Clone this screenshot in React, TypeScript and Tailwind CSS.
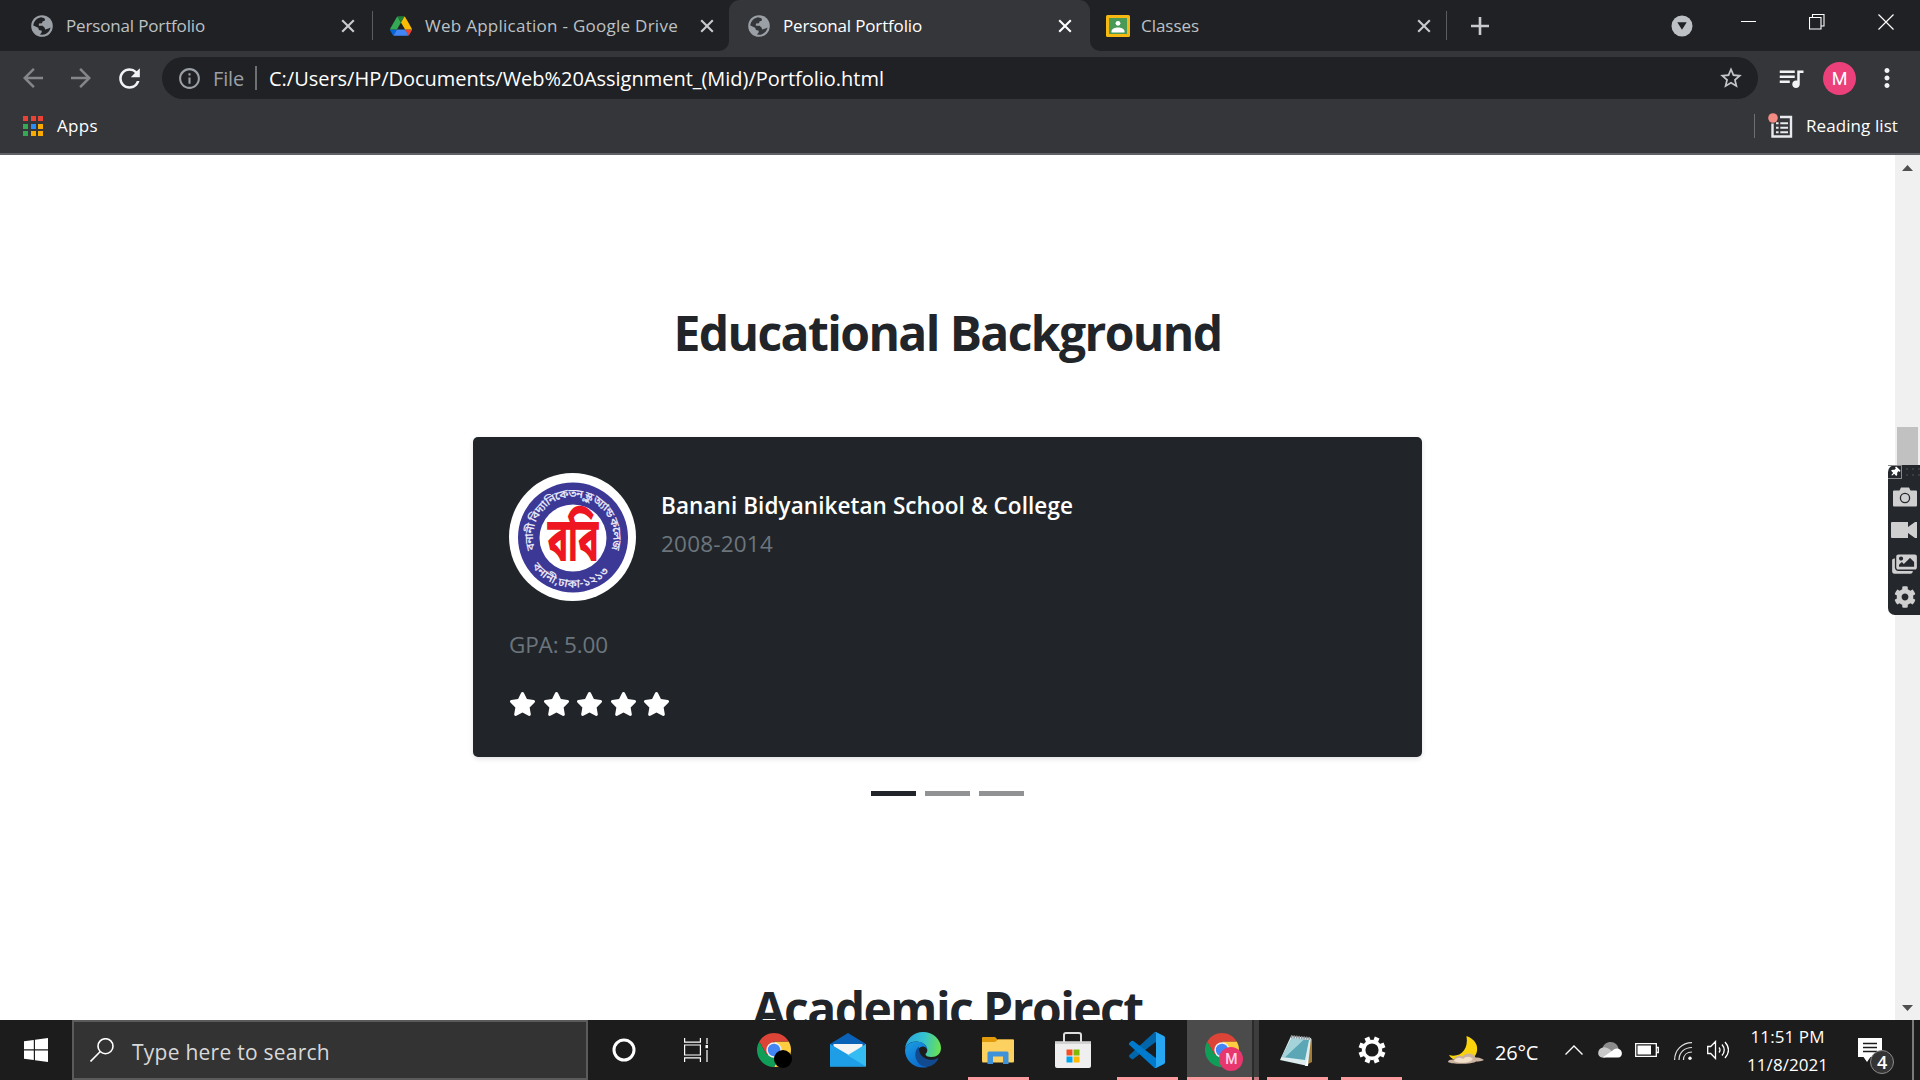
import { useLayoutEffect, useRef, useState } from "react";
import type { ReactNode } from "react";
import { MdArrowBack, MdArrowForward, MdRefresh, MdInfoOutline, MdStarBorder, MdQueueMusic, MdMoreVert } from "react-icons/md";
import { FaStar, FaCog, FaThumbtack, FaImages } from "react-icons/fa";

/** One line of text whose tracking is adjusted so it fills the given width. */
function Line({ children, width, className = "" }: { children: string; width: number; className?: string }) {
  const ref = useRef<HTMLSpanElement>(null);
  const [spacing, setSpacing] = useState(0);
  useLayoutEffect(() => {
    if (ref.current) {
      setSpacing((width - ref.current.getBoundingClientRect().width) / children.length);
    }
  }, [width, children]);
  return (
    <span ref={ref} className={`inline-block shrink-0 whitespace-pre ${className}`} style={{ letterSpacing: `${spacing}px` }}>
      {children}
    </span>
  );
}

function Cross({ className = "" }: { className?: string }) {
  return (
    <svg viewBox="0 0 14 14" className={`h-3.5 w-3.5 shrink-0 ${className}`} fill="none" stroke="currentColor" strokeWidth="2.1">
      <path d="M1.2 1.2 12.8 12.8M12.8 1.2 1.2 12.8" />
    </svg>
  );
}

function Globe({ className = "" }: { className?: string }) {
  return (
    <svg viewBox="0 0 22 22" className={`h-[22px] w-[22px] shrink-0 ${className}`}>
      <circle cx="11" cy="11" r="10.800" fill="#9aa0a6" />
      <path
        d="M2.300 10.500C2.600 6.500 6 3 10 2.300L13.500 3.300 14 5.500 11.500 6.500 11 8.200 8 8.500 7.800 10.800 11.500 10.800 13.500 12.500 14.200 14.500 17.500 13.600 19.500 12.500C19 16 16 19.500 11.500 19.800L8.800 19.400 10.500 17.800 10.800 15.800 8 15 7.200 12.800Z"
        fill="currentColor"
      />
    </svg>
  );
}

function DriveIcon() {
  return (
    <svg viewBox="0 0 87.3 78" className="h-5 w-[22px] shrink-0">
      <path fill="#0066da" d="m6.6 66.85 3.85 6.65c.8 1.4 1.95 2.5 3.3 3.3l13.75-23.8h-27.5c0 1.55.4 3.1 1.2 4.5z" />
      <path fill="#34a853" d="m43.65 25-13.75-23.8c-1.35.8-2.5 1.9-3.3 3.3l-25.4 44a9.06 9.06 0 0 0 -1.2 4.5h27.5z" />
      <path fill="#ea4335" d="m73.55 76.8c1.35-.8 2.5-1.9 3.3-3.3l1.6-2.75 7.65-13.25c.8-1.4 1.2-2.95 1.2-4.5h-27.502l5.852 11.5z" />
      <path fill="#188038" d="m43.65 25 13.75-23.8c-1.35-.8-2.9-1.2-4.5-1.2h-18.5c-1.6 0-3.15.45-4.5 1.2z" />
      <path fill="#4285f4" d="m59.8 53h-32.3l-13.75 23.8c1.35.8 2.9 1.2 4.5 1.2h50.8c1.6 0 3.15-.45 4.5-1.2z" />
      <path fill="#fbbc04" d="m73.4 26.5-12.7-22c-.8-1.4-1.95-2.5-3.3-3.3l-13.75 23.8 16.15 28h27.45c0-1.55-.4-3.1-1.2-4.5z" />
    </svg>
  );
}

function ClassroomIcon() {
  return (
    <svg viewBox="0 0 24 22" className="h-[22px] w-6 shrink-0">
      <rect width="24" height="22" rx="1.5" fill="#f5b912" />
      <rect x="3" y="3" width="18" height="16" fill="#4a9a57" />
      <circle cx="12" cy="8.3" r="2.4" fill="#fff" />
      <path d="M5.5 17.5v-1.2c0-2.5 3.5-3.9 6.500-3.900s6.500 1.400 6.500 3.900v1.200z" fill="#fff" />
    </svg>
  );
}

function TabStrip() {
  return (
    <div className="flex h-[51px] items-center bg-[#202124] text-[17px] text-[#bdc1c6]">
      <div className="flex h-full w-[372px] items-center pl-[31px] pr-[17px]">
        <Globe className="mr-[13px] text-[#202124]" />
        <Line width={139}>Personal Portfolio</Line>
        <Cross className="ml-auto text-[#c8cacd]" />
      </div>
      <div className="h-[29px] w-px bg-[#5a5c60]" />
      <div className="flex h-full w-[356px] items-center pl-[17px] pr-[15px]">
        <DriveIcon />
        <Line width={253} className="ml-[13px]">Web Application - Google Drive</Line>
        <Cross className="ml-auto text-[#c8cacd]" />
      </div>
      <div className="relative flex h-full w-[361px] items-center rounded-t-[11px] bg-[#35363a] pl-[19px] pr-[18px] text-white">
        <svg viewBox="0 0 10 10" className="absolute bottom-0 -left-2.5 h-2.5 w-2.5"><path d="M10 0V10H0A10 10 0 0 0 10 0" fill="#35363a" /></svg>
        <svg viewBox="0 0 10 10" className="absolute bottom-0 -right-2.5 h-2.5 w-2.5"><path d="M0 0V10H10A10 10 0 0 1 0 0" fill="#35363a" /></svg>
        <Globe className="mr-[13px] text-[#35363a]" />
        <Line width={139}>Personal Portfolio</Line>
        <Cross className="ml-auto" />
      </div>
      <div className="flex h-full w-[356px] items-center pl-4 pr-[15px]">
        <ClassroomIcon />
        <Line width={58} className="ml-[11px]">Classes</Line>
        <Cross className="ml-auto text-[#c8cacd]" />
      </div>
      <div className="h-[29px] w-px bg-[#5a5c60]" />
      <svg viewBox="0 0 18 18" className="ml-6 h-[18px] w-[18px] text-[#c8cacd]" stroke="currentColor" strokeWidth="2.6"><path d="M9 0v18M0 9h18" /></svg>
      <svg viewBox="0 0 22 22" className="ml-[182px] h-[22px] w-[22px]">
        <circle cx="11" cy="11" r="10.5" fill="#bdc1c6" />
        <path d="M6.300 7.300h9.400L11 14.800z" fill="#202124" />
      </svg>
      <div className="ml-[48px] flex h-full items-start pt-3.5 text-white">
        <svg viewBox="0 0 16 16" className="h-4 w-4" fill="none" stroke="currentColor"><path d="M0 7.500h15" /></svg>
        <svg viewBox="0 0 16 16" className="ml-[52px] h-4 w-4" fill="none" stroke="currentColor" strokeWidth="1.100"><path d="M.5 3.500h11.500v11.500H.5zM3.500 3.500v-3h11.500v11.500h-3" /></svg>
        <svg viewBox="0 0 16 16" className="ml-[53px] h-4 w-4" fill="none" stroke="currentColor" strokeWidth="1.200"><path d="M.5.5l15 15M15.500.5l-15 15" /></svg>
      </div>
    </div>
  );
}

function Toolbar() {
  return (
    <div className="flex h-[54px] items-center bg-[#35363a] pl-[18px]">
      <MdArrowBack className="h-[30px] w-[30px] text-[#85868a]" />
      <MdArrowForward className="ml-[18px] h-[30px] w-[30px] text-[#85868a]" />
      <MdRefresh className="ml-[18px] h-[31px] w-[31px] text-[#f1f3f4]" />
      <div className="ml-[17px] flex h-[42px] w-[1596px] items-center rounded-full bg-[#202124] pl-[15px] pr-3.5 text-[20px]">
        <MdInfoOutline className="h-[25px] w-[25px] text-[#9aa0a6]" />
        <Line width={31} className="ml-[11px] pt-px text-[#9aa0a6]">File</Line>
        <div className="ml-[11px] h-6 w-[2px] bg-[#6d6f73]" />
        <Line width={615} className="ml-3 pt-px text-white">C:/Users/HP/Documents/Web%20Assignment_(Mid)/Portfolio.html</Line>
        <MdStarBorder className="ml-auto h-[26px] w-[26px] text-[#c2c5c9]" />
      </div>
      <MdQueueMusic className="ml-[18px] h-[30px] w-[30px] text-[#f1f3f4]" />
      <div className="ml-[17px] flex h-[33px] w-[33px] items-center justify-center rounded-full bg-[#ec407a] font-[Roboto] text-[18px] text-white">M</div>
      <MdMoreVert className="ml-4 h-[30px] w-[30px] text-[#f1f3f4]" />
    </div>
  );
}

function AppsGrid() {
  return (
    <div className="grid grid-cols-3 gap-[2.500px]">
      <i className="h-[5px] w-[5px] bg-[#ea4335]" /><i className="h-[5px] w-[5px] bg-[#ea4335]" /><i className="h-[5px] w-[5px] bg-[#ea4335]" />
      <i className="h-[5px] w-[5px] bg-[#34a853]" /><i className="h-[5px] w-[5px] bg-[#2a8cf5]" /><i className="h-[5px] w-[5px] bg-[#f9ab00]" />
      <i className="h-[5px] w-[5px] bg-[#34a853]" /><i className="h-[5px] w-[5px] bg-[#f9ab00]" /><i className="h-[5px] w-[5px] bg-[#f9ab00]" />
    </div>
  );
}

function BookmarksBar() {
  return (
    <div className="flex h-[50px] items-center border-b-2 border-[#606166] bg-[#35363a] pb-1.5 pl-[23px] text-[17px] text-white">
      <AppsGrid />
      <Line width={41} className="ml-3.5">Apps</Line>
      <div className="ml-auto h-6 w-px bg-[#6d6f73]" />
      <svg viewBox="0 0 26 26" className="ml-[13px] h-[26px] w-[26px]" fill="none">
        <path d="M4.500 10.500v13h18.500v-19.500h-11" stroke="#e8eaed" strokeWidth="2.400" />
        <path d="M8 10.200h2.600m1.700 0h7.700M8 14.700h2.600m1.700 0h7.700M8 19.200h2.600m1.700 0h7.700" stroke="#e8eaed" strokeWidth="2" />
        <circle cx="5" cy="5" r="4.800" fill="#f28b82" />
      </svg>
      <Line width={92} className="ml-3 mr-[22px]">Reading list</Line>
    </div>
  );
}

function SchoolSeal() {
  return (
    <svg viewBox="0 0 127 128" className="h-[128px] w-[127px] shrink-0">
      <defs>
        <path id="seal-upper" d="M26 76.300A40 40 0 1 1 101 79.800" />
        <path id="seal-lower" d="M21.400 91A50 50 0 0 0 102.300 96.600" />
      </defs>
      <ellipse cx="63.500" cy="64" rx="63.500" ry="64" fill="#fff" />
      <circle cx="64" cy="64.500" r="55" fill="#3b3896" />
      <circle cx="64" cy="65" r="33.500" fill="#fff" />
      <g fill="#e6e5f6" fontWeight="600" fontFamily="'Noto Sans Bengali','Noto Sans',sans-serif">
        <text fontSize="11.500"><textPath href="#seal-upper" textLength="150">বনানী বিদ্যানিকেতন স্কুল অ্যান্ড কলেজ</textPath></text>
        <text fontSize="11.500"><textPath href="#seal-lower" textLength="88" startOffset="3">বনানী,ঢাকা-১২১৩</textPath></text>
      </g>
      <text transform="translate(64 88) scale(1 1.480)" textAnchor="middle" fontSize="41" fontWeight="800" textLength="51" lengthAdjust="spacingAndGlyphs" fill="#ee1620" fontFamily="'Noto Sans Bengali','Noto Sans',sans-serif">ববি</text>
    </svg>
  );
}

function EducationCard() {
  return (
    <section className="h-[320px] w-[949px] rounded-[5px] bg-[#212529] px-9 pt-9 shadow-[0_2px_5px_rgba(0,0,0,0.12)]">
      <div className="flex">
        <SchoolSeal />
        <div className="ml-[25px] flex flex-col items-start pt-3.5 text-[22.500px] leading-[38px]">
          <Line width={412} className="font-semibold text-white">Banani Bidyaniketan School &amp; College</Line>
          <Line width={112} className="text-[#6c757d]">2008-2014</Line>
        </div>
      </div>
      <div className="mt-[25px] flex h-[38px] items-center text-[22.500px] text-[#6c757d]">
        <Line width={99}>GPA: 5.00</Line>
      </div>
      <div className="mt-7 flex gap-[6.600px] text-white">
        <FaStar className="h-6 w-[27px]" /><FaStar className="h-6 w-[27px]" /><FaStar className="h-6 w-[27px]" /><FaStar className="h-6 w-[27px]" /><FaStar className="h-6 w-[27px]" />
      </div>
    </section>
  );
}

function RecorderWidget() {
  return (
    <div className="absolute top-[310px] right-0 flex h-[150px] w-8 flex-col items-center rounded-l-[7px] bg-[#24272c] text-[#cfcfcf]">
      <div className="flex h-3.5 w-full items-center">
        <div className="flex h-3.5 w-3.5 items-center justify-center border border-l-0 border-[#8a8a8a]"><FaThumbtack className="h-2.5 w-2.5 rotate-45 text-white" /></div>
        <div className="ml-1 grid grid-cols-3 gap-1"><i className="h-0.5 w-0.5 bg-[#3a3d42]" /><i className="h-0.5 w-0.5 bg-[#3a3d42]" /><i className="h-0.5 w-0.5 bg-[#3a3d42]" /><i className="h-0.5 w-0.5 bg-[#3a3d42]" /><i className="h-0.5 w-0.5 bg-[#3a3d42]" /><i className="h-0.5 w-0.5 bg-[#3a3d42]" /></div>
      </div>
      <svg viewBox="0 0 24 20" className="mt-2 ml-px h-5 w-6">
        <path d="M1 3.500h5.500L8 .5h8l1.500 3H23q1 0 1 1v14q0 1-1 1H1q-1 0-1-1v-14q0-1 1-1z" fill="#cfcfcf" />
        <circle cx="12" cy="11" r="4.600" fill="none" stroke="#24272c" strokeWidth="1.300" />
      </svg>
      <svg viewBox="0 0 26 18" className="mt-3.5 h-[18px] w-[26px]"><path d="M1 1h16v5l7-5h2v16h-2l-7-5v5H1q-1 0-1-1V2q0-1 1-1z" fill="#cfcfcf" /></svg>
      <FaImages className="mt-3.5 ml-px h-[22px] w-[25px]" />
      <FaCog className="mt-[11px] ml-px h-[22px] w-[22px]" />
    </div>
  );
}

function Page() {
  return (
    <div className="relative flex h-[865px] overflow-hidden bg-white">
      <main className="flex flex-1 flex-col items-center text-[#212529]">
        <h2 className="mt-[143px] flex h-[70px] items-center text-[48px] leading-[70px] font-bold"><Line width={548}>Educational Background</Line></h2>
        <div className="mt-[69px]"><EducationCard /></div>
        <div className="mt-[34px] flex gap-[9px]">
          <i className="h-[5px] w-[45px] bg-[#212529]" /><i className="h-[5px] w-[45px] bg-[#909293]" /><i className="h-[5px] w-[45px] bg-[#909293]" />
        </div>
        <h2 className="mt-[178px] flex h-[70px] shrink-0 items-center text-[48px] leading-[70px] font-bold"><Line width={390}>Academic Project</Line></h2>
      </main>
      <aside className="flex w-[25px] flex-col items-center bg-[#f0f0f0]">
        <svg viewBox="0 0 11 6" className="mt-2.5 h-1.5 w-[11px]"><path d="M0 6h11L5.500 0z" fill="#505050" /></svg>
        <i className="mt-[256px] h-[120px] w-[21px] bg-[#c1c1c1]" />
        <svg viewBox="0 0 11 6" className="mt-auto mb-[9px] h-1.5 w-[11px]"><path d="M0 0h11L5.500 6z" fill="#505050" /></svg>
      </aside>
      <RecorderWidget />
    </div>
  );
}

function ChromeIcon() {
  return (
    <svg viewBox="0 0 34 34" className="h-[34px] w-[34px]">
      <path d="M17 8.500H31.720A17 17 0 0 1 17 34L24.400 21.200z" fill="#ffcd40" />
      <path d="M9.600 21.200 2.280 8.500A17 17 0 0 0 17 34L24.400 21.200z" fill="#0f9d58" />
      <path d="M17 8.500H31.720A17 17 0 0 0 2.280 8.500L9.600 21.200z" fill="#db4437" />
      <circle cx="17" cy="17" r="7.700" fill="#f1f1f1" />
      <circle cx="17" cy="17" r="6.200" fill="#4285f4" />
    </svg>
  );
}

function MailIcon() {
  return (
    <svg viewBox="0 0 36 34" className="h-[34px] w-9">
      <path d="M0 11 18 0 36 11v10H0z" fill="#0a62b8" />
      <path d="M3.500 11h29v12h-29z" fill="#f4f4f4" />
      <path d="M0 11 22 24 0 33.500z" fill="#1a98e4" />
      <path d="M36 11v22.500H0L18 22z" fill="#35bdf3" />
      <path d="M0 11.500 36 33.500H0z" fill="#1f9ee8" />
    </svg>
  );
}

function EdgeIcon() {
  return (
    <svg viewBox="0 0 36 36" className="h-9 w-9">
      <defs>
        <linearGradient id="edge-top" x1="0" y1=".4" x2="1" y2=".5"><stop offset="0" stopColor="#2aa5e0" /><stop offset=".5" stopColor="#35c1d0" /><stop offset="1" stopColor="#6be24e" /></linearGradient>
        <linearGradient id="edge-left" x1="0" y1="0" x2=".6" y2="1"><stop offset="0" stopColor="#1b9de2" /><stop offset="1" stopColor="#0b6ccf" /></linearGradient>
      </defs>
      <path d="M0 17C1 7 8.500 0 18 0c10 0 18 7.500 18 16 0 6-4.500 9-9.500 9-4 0-6-1.400-6-2.500 0-.9 1.800-1.500 1.800-4.500C22.300 13 17 9.500 11 9.500 5 9.500 1.500 13 0 17z" fill="url(#edge-top)" />
      <path d="M0 18C1 13 5.500 9.500 11 9.500c6 0 11 3.500 11.300 8-1-2-2.800-3-4.300-3-4 0-6.500 5-5 10.500 1.500 5.500 5.500 9 10 10C10 38 0 29 0 18z" fill="url(#edge-left)" />
      <path d="M14 14.800C9.500 18 9 25 13 30.500c3 4 8 5 12 3.800 4-1.500 6.500-4 8.300-7.300.3-.7-.3-1.200-1-.8C24 30.500 13 25.500 14 14.800z" fill="#114a8e" />
    </svg>
  );
}

function ExplorerIcon() {
  return (
    <svg viewBox="0 0 32 27" className="h-[27px] w-8">
      <path d="M0 1q0-1 1-1h12l2.500 2.500H31q1 0 1 1V10H0z" fill="#e19a0b" />
      <path d="M0 5h13l3-2.500h15q1 0 1 1V24q0 1.500-1 1.500H1Q0 25.500 0 24z" fill="#fdd160" />
      <path d="M5.500 27V16q0-1.500 1.500-1.500h18q1.500 0 1.500 1.500v11h-5.500v-7.500H11V27z" fill="#3e92da" />
    </svg>
  );
}

function StoreIcon() {
  return (
    <svg viewBox="0 0 36 36" className="h-9 w-9">
      <path d="M9 12V3q0-2 2-2h13q2 0 2 2v9" fill="none" stroke="#dedede" strokeWidth="2" />
      <path d="M0 9.500h36V34q0 2-2 2H2q-2 0-2-2z" fill="#efefef" />
      <path d="M0 9.500h36v2.500H0z" fill="#d2d2d2" />
      <path d="M11.500 17.500h6v6h-6z" fill="#f25022" /><path d="M18.500 17.500h6v6h-6z" fill="#7fba00" />
      <path d="M11.500 24.500h6v6h-6z" fill="#00a4ef" /><path d="M18.500 24.500h6v6h-6z" fill="#ffb900" />
    </svg>
  );
}

function CodeIcon() {
  return (
    <svg viewBox="0 0 100 100" className="h-9 w-9">
      <path d="M96.500 10.800 75.900.9a6.200 6.200 0 0 0-7.100 1.200L1.300 63.600a4.200 4.200 0 0 0 0 6.200l5.500 5a4.200 4.200 0 0 0 5.300.2L93.400 13.400c2.700-2.100 6.600-.1 6.600 3.300v-.3c0-2.400-1.400-4.500-3.500-5.600z" fill="#0065a9" />
      <path d="M96.500 89.200 75.900 99.100a6.200 6.200 0 0 1-7.100-1.200L1.300 36.400a4.200 4.200 0 0 1 0-6.200l5.500-5a4.200 4.200 0 0 1 5.300-.2l81.300 61.600c2.700 2.100 6.600.1 6.600-3.300v.3c0 2.400-1.400 4.500-3.500 5.600z" fill="#007acc" />
      <path d="M75.900 99.100a6.200 6.200 0 0 1-7.100-1.200c2.300 2.300 6.200.7 6.200-2.600V4.700c0-3.300-3.900-4.900-6.200-2.600a6.200 6.200 0 0 1 7.100-1.200l20.600 9.900a6.300 6.300 0 0 1 3.500 5.600v67.200c0 2.400-1.400 4.600-3.500 5.600z" fill="#27a7f2" />
    </svg>
  );
}

function NotepadIcon() {
  return (
    <svg viewBox="0 0 33 33" className="h-[33px] w-[33px]">
      <path d="M29 4l3 1v23l-4 2z" fill="#a67c35" />
      <path d="M11 2 31 4 28 32 0 26z" fill="#dcecef" />
      <path d="M11.500 4.500 29 6 25 26 2 23z" fill="#5ba7b5" />
      <path d="M11.500 4.500 24 5.500 5 23.300 2 23z" fill="#a5d3da" />
      <path d="M11 2.500 31 4.500" stroke="#8f9699" strokeWidth="3" strokeDasharray="1.500 1" />
      <path d="M25 32 28 24 28 32z" fill="#fff" />
    </svg>
  );
}

function SettingsIcon() {
  return (
    <svg viewBox="-14 -14 28 28" className="h-7 w-7" fill="none" stroke="#fff">
      <circle r="8.400" strokeWidth="3.600" />
      <g strokeWidth="5">
        <path d="M0-13.500v4M0 13.500v-4M-13.500 0h4M13.500 0h-4" transform="rotate(22.500)" />
        <path d="M0-13.500v4M0 13.500v-4M-13.500 0h4M13.500 0h-4" transform="rotate(67.500)" />
      </g>
    </svg>
  );
}

function AppSlot({ children, running = false }: { children: ReactNode; running?: boolean }) {
  return (
    <div className="relative flex h-full w-[74.750px] items-center justify-center">
      {children}
      {running && <i className="absolute bottom-0 left-[7px] h-[3px] w-[61px] bg-[#fb9a9f]" />}
    </div>
  );
}

function Tray() {
  return (
    <div className="flex h-full items-center pl-[39px] text-white">
      <svg viewBox="0 0 36 30" className="h-[30px] w-9">
        <path d="M18.500 1C27 4 31 11 28.500 18c-3 8-14 10-21.500 7-3-1.200-5-3-6-5 10 3 20-4 17.500-19z" fill="#fbd30d" />
        <path d="M0 27c0-2.500 5-2.500 6-2.500 1-4 7-4.500 9-3 2-4.500 11-4 12.500 1 4-.5 7 1.500 8.500 2.500-2 1-6 1.500-8 1.500-2 2.500-23 3.500-28 .5z" fill="#cbb2a1" />
        <path d="M6 26c2-4 6-4 9-2 3-3 7-3 10 0-2 4-14 5-19 2z" fill="#f3e0c8" />
      </svg>
      <Line width={43} className="ml-[11px] pt-[5px] text-[20px] leading-[55px]">26°C</Line>
      <svg viewBox="0 0 18 10" className="ml-[27px] h-2.5 w-[18px]" fill="none" stroke="currentColor" strokeWidth="1.400"><path d="M.5 9.500 9 1l8.500 8.500" /></svg>
      <svg viewBox="0 0 24 16" className="ml-[15px] h-4 w-6">
        <path d="M4 8C5 2 9 0 12.500 0 17 0 20 3 20.500 7l-7 4z" fill="#8b8b8b" />
        <path d="M4 15.500c-5 0-5.500-9 1-10 4-.8 7 2 9 4l-7 6z" fill="#c8c8c8" />
        <path d="M4.500 15.500 14 9c2-2 4-3 7-2 4 1.500 4 8.500-1 8.500z" fill="#fff" />
      </svg>
      <svg viewBox="0 0 24 14" className="ml-[13px] h-3.5 w-6"><path d="M.7.700h20.600v12.600H.7zM21.300 4.500h2v5h-2z" fill="none" stroke="#fff" strokeWidth="1.300" /><path d="M2.500 2.500h13.500v9H2.500z" fill="#fff" /></svg>
      <svg viewBox="0 0 18 18" className="mt-0.5 ml-[15px] h-[18px] w-[18px]" fill="none" stroke="#e0e0e0" strokeWidth="1.200">
        <path d="M.600 18C.6 8 8 .600 18 .600M5 18C5 10.500 10.500 5.500 18 5.500M9.500 18c0-5 3.500-8 8.500-8" />
        <circle cx="16" cy="16.200" r="1.700" fill="#fff" stroke="none" />
      </svg>
      <svg viewBox="0 0 22 20" className="ml-[15px] h-5 w-[22px]" fill="none" stroke="#fff" strokeWidth="1.300">
        <path d="M.700 6.500h3L8.500 1.500v17L3.700 13.500h-3zM12 7.500q2 2.500 0 5M15 4.500q4.500 5.500 0 11M18 2q7 8 0 16" />
      </svg>
      <div className="ml-[18px] flex w-[81px] flex-col items-center pt-0.5 text-[17px] leading-[28px]">
        <Line width={74}>11:51 PM</Line>
        <Line width={81}>11/8/2021</Line>
      </div>
      <div className="relative ml-[30px] h-6 w-9">
        <svg viewBox="0 0 36 36" className="absolute top-0 left-0 h-9 w-9">
          <path d="M0 0h24v19H12.500L9 24 5.500 19H0z" fill="#fff" />
          <path d="M5 5.500h14M5 9.500h14M5 13.500h14" stroke="#1c1c1c" strokeWidth="1.300" />
          <circle cx="24" cy="24" r="11.500" fill="#343434" stroke="#8b8b8b" />
        </svg>
        <span className="absolute top-3 left-3 flex h-6 w-6 items-center justify-center text-[18px] font-semibold">4</span>
      </div>
      <i className="ml-[18px] h-full w-0.5 bg-[#7a7a7a]" />
    </div>
  );
}

function Taskbar() {
  return (
    <div className="flex h-[60px] items-center bg-[#1c1c1c]">
      <div className="flex w-[72px] justify-center">
        <svg viewBox="0 0 24 24" className="h-6 w-6" fill="#fff"><path d="M0 3.300 9.800 2v9.300H0zM11 1.800 24 0v11.300H11zM0 12.500h9.800V22L0 20.700zM11 12.500h13V24L11 22.200z" /></svg>
      </div>
      <div className="flex h-full w-[516px] items-center border-2 border-[#5b5b5b] bg-[#333] pl-4">
        <svg viewBox="0 0 24 24" className="h-6 w-6" fill="none" stroke="#fff" strokeWidth="1.600"><circle cx="15.500" cy="8.200" r="7.500" /><path d="M10.300 13.500.5 23.500" /></svg>
        <Line width={198} className="ml-[18px] pt-[5px] text-[21px] text-[#d8d8d8]">Type here to search</Line>
      </div>
      <div className="flex w-[72px] justify-center"><svg viewBox="0 0 24 24" className="h-6 w-6"><circle cx="12" cy="12" r="10" fill="none" stroke="#fff" strokeWidth="3" /></svg></div>
      <div className="flex w-[76.300px] justify-center pr-1">
        <svg viewBox="0 0 24 24" className="h-6 w-6" fill="none" stroke="#fff" strokeWidth="1.200">
          <path d="M.600 0v4.200h15.800V0M.600 24v-4.200h15.800V24M.600 7h15.800v10H.6zM23 0v6M23 12v12" /><path d="M21.500 7h3v3.200h-3z" fill="#fff" stroke="none" />
        </svg>
      </div>
      <AppSlot><div className="relative"><ChromeIcon /><i className="absolute -right-[1px] -bottom-[1px] h-[18px] w-[18px] rounded-full bg-black" /></div></AppSlot>
      <AppSlot><MailIcon /></AppSlot>
      <AppSlot><EdgeIcon /></AppSlot>
      <AppSlot running>
        <ExplorerIcon />
        <i className="absolute bottom-0 left-[54px] h-[3px] w-0.5 bg-[#7d5255]" />
        <i className="absolute bottom-0 left-[55px] h-[3px] w-[13px] bg-[#c77b80]" />
      </AppSlot>
      <AppSlot><StoreIcon /></AppSlot>
      <AppSlot running><CodeIcon /></AppSlot>
      <div className="flex h-full w-[74.750px] pl-[2.500px]">
        <div className="flex h-full w-[65px] items-center justify-center border-b-[3px] border-[#fb9a9f] bg-[#4b4b4b] pt-[3px] pl-[5px]">
          <div className="relative">
            <ChromeIcon />
            <span className="absolute top-3.5 left-3.5 flex h-6 w-6 items-center justify-center rounded-full bg-[#e8366f] font-[Roboto] text-[14px] font-medium text-[#ffd6e4]">M</span>
          </div>
        </div>
        <i className="flex h-full w-[7px] flex-col border-l-2 border-[#2b2b2b] bg-[#3d3d3d]"><i className="mt-auto h-[3px] bg-[#c77b80]" /></i>
      </div>
      <AppSlot running><NotepadIcon /></AppSlot>
      <AppSlot running><SettingsIcon /></AppSlot>
      <Tray />
    </div>
  );
}

export default function App() {
  return (
    <div className="flex h-[1080px] w-[1920px] flex-col overflow-hidden bg-white font-['Open_Sans','Noto_Sans',sans-serif]">
      <TabStrip />
      <Toolbar />
      <BookmarksBar />
      <Page />
      <Taskbar />
    </div>
  );
}
